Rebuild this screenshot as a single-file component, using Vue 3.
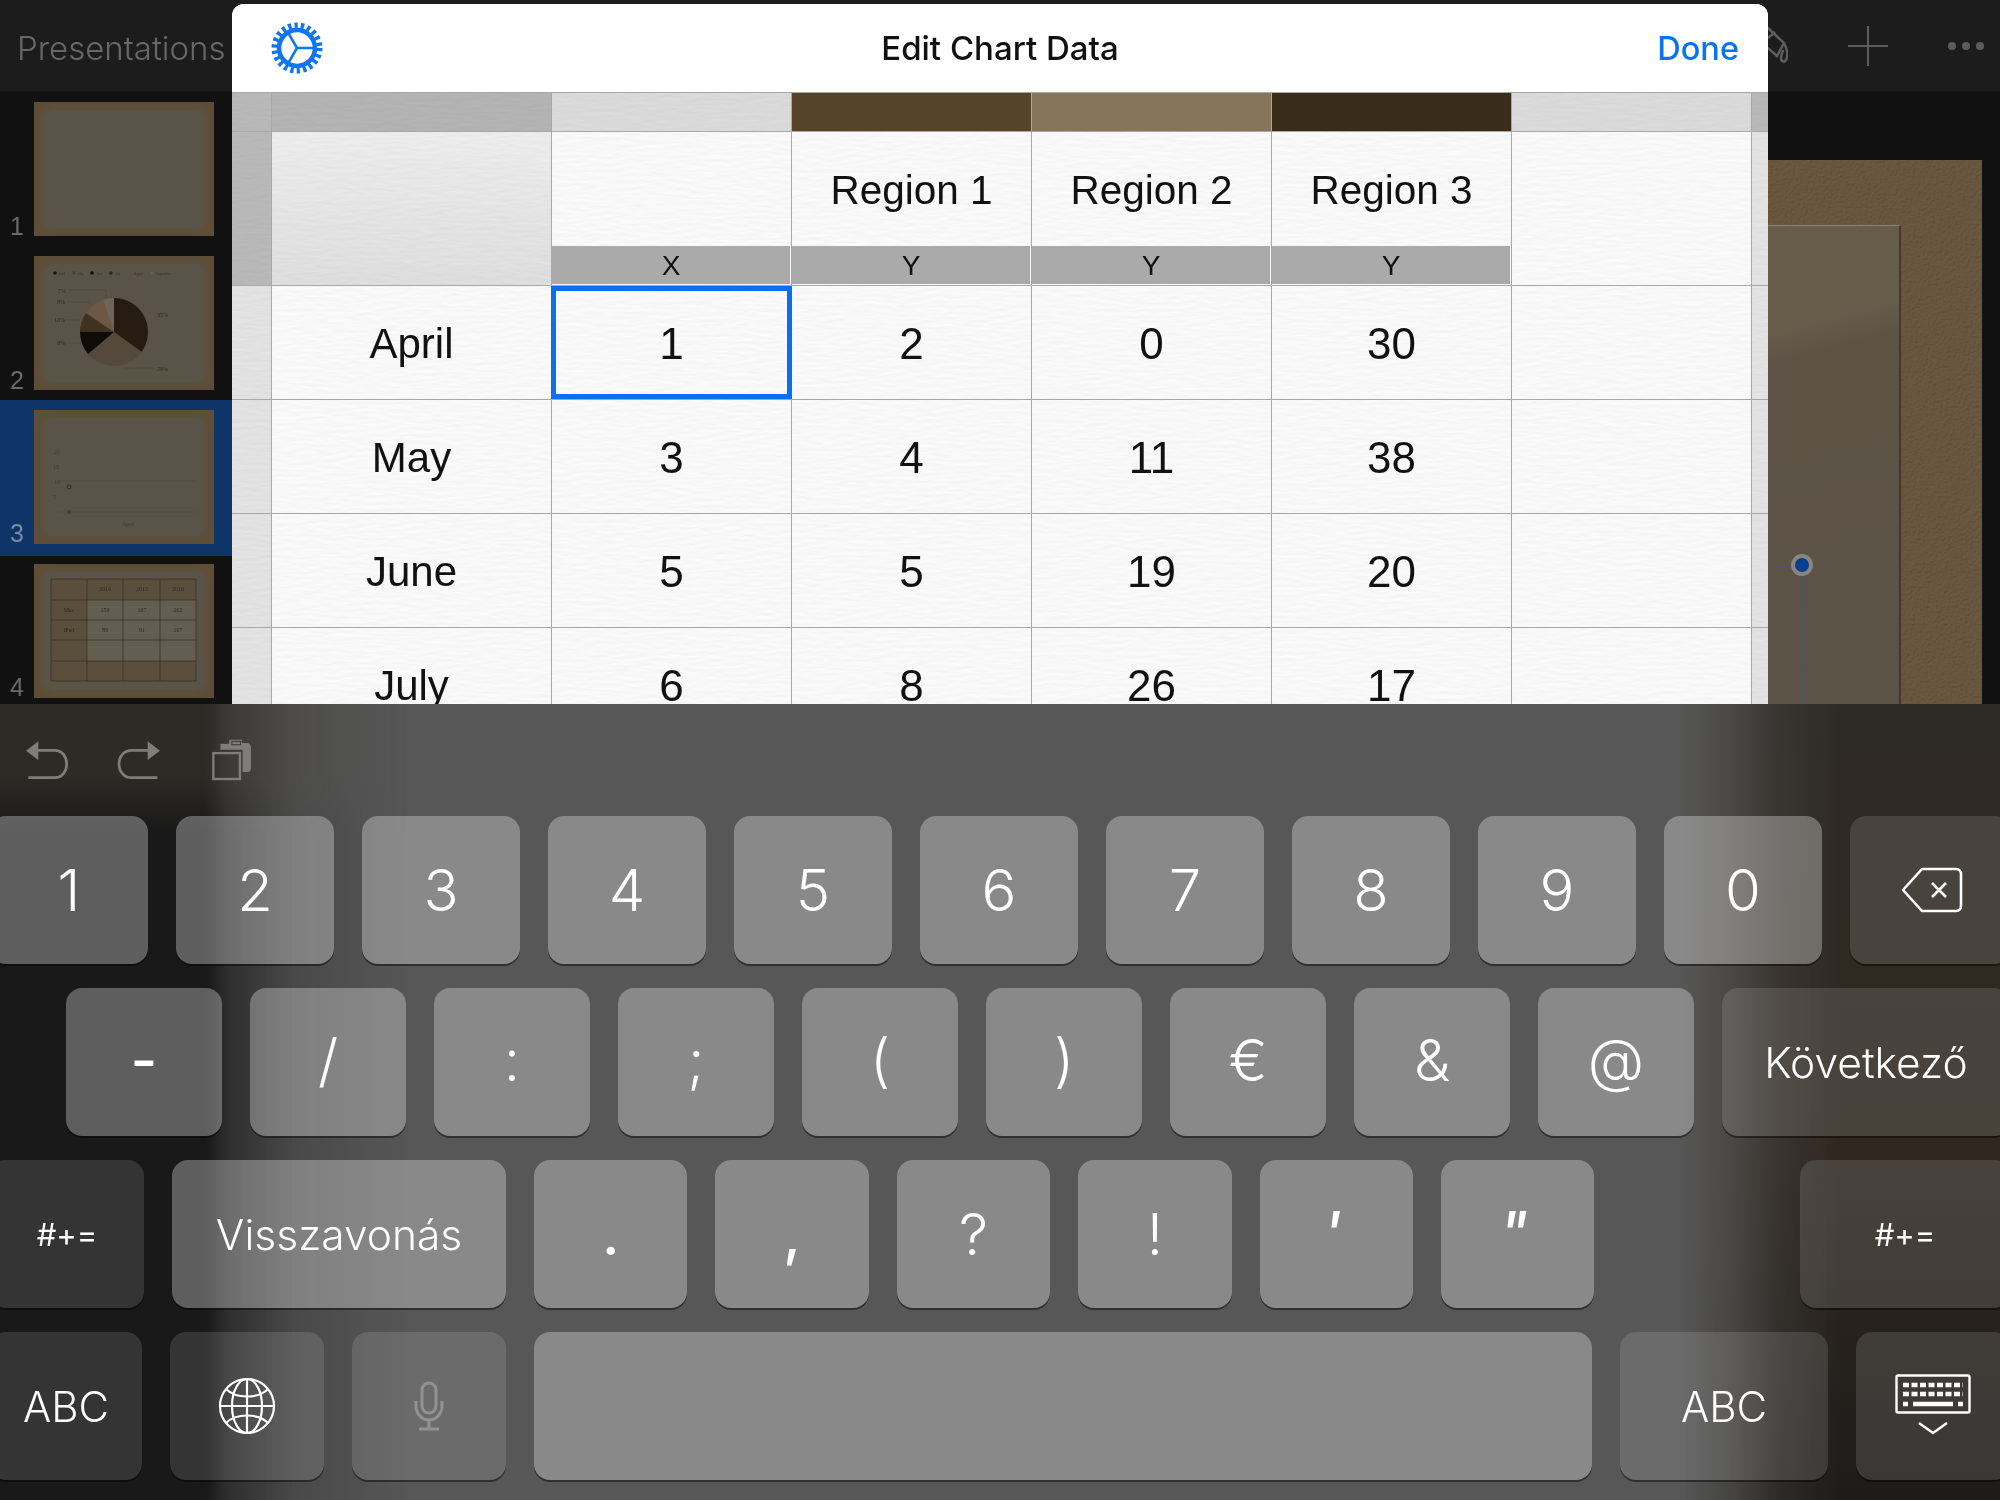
<script setup>
const heads = [
  { label: '', axis: 'X' },
  { label: 'Region 1', axis: 'Y' },
  { label: 'Region 2', axis: 'Y' },
  { label: 'Region 3', axis: 'Y' }
]
const rows = [
  ['April', '1', '2', '0', '30'],
  ['May', '3', '4', '11', '38'],
  ['June', '5', '5', '19', '20'],
  ['July', '6', '8', '26', '17']
]
const row1 = ['1', '2', '3', '4', '5', '6', '7', '8', '9', '0']
const row2 = ['-', '/', ':', ';', '(', ')', '€', '&', '@']
const row3 = [
  { k: '.', c: 'heavy' }, { k: ',', c: 'heavy' }, { k: '?', c: '' },
  { k: '!', c: '' }, { k: "'", c: 'slant' }, { k: '"', c: 'slant' }
]
const legend = [
  { x: 21, t: 'April', f: '#1c1610' }, { x: 40, t: 'May', f: '#4c4234' }, { x: 58, t: 'June', f: '#0d0a06' },
  { x: 77, t: 'July', f: '#2f2616' }, { x: 96, t: 'August', f: '#5f5242' }, { x: 118, t: 'September', f: '#66604f' }
]
const thumbLabels = [
  { x: 24, y: 37, t: '7%' }, { x: 23, y: 48, t: '8%' }, { x: 20, y: 66, t: '10%' },
  { x: 23, y: 89, t: '8%' }, { x: 123, y: 61, t: '35%' }, { x: 123, y: 115, t: '29%' }
]
const tableCells = [
  { x: 71, y: 27, t: '2014' }, { x: 108, y: 27, t: '2015' }, { x: 144, y: 27, t: '2016' },
  { x: 35, y: 48, t: 'Mac' }, { x: 71, y: 48, t: '159' }, { x: 108, y: 48, t: '167' }, { x: 144, y: 48, t: '202' },
  { x: 35, y: 68, t: 'iPad' }, { x: 71, y: 68, t: '89' }, { x: 108, y: 68, t: '91' }, { x: 144, y: 68, t: '107' }
]
</script>

<template>
  <div class="screen">
    <header class="topbar">
      <span class="back">Presentations</span>
      <div class="tools">
        <svg class="tool-bucket" width="42" height="40" viewBox="0 0 42 40" fill="none" stroke="#5e5e5e" stroke-width="2.4">
          <path d="M8 16 L22 2 L38 17 L31 30 L22 22 L8 34" />
          <path d="M22 12 L29 6" />
          <path d="M38 17 C41 23 42 29 40.5 33 C39 37 35 36 35 32 C35 29 36.5 27 37 24" />
        </svg>
        <svg class="tool-plus" width="40" height="40" viewBox="0 0 40 40" stroke="#5c5c5c" stroke-width="2">
          <path d="M20 0 V40 M0 20 H40" />
        </svg>
        <div class="tool-dots"><i></i><i></i><i></i></div>
      </div>
    </header>

    <main class="work">
      <aside class="slides">
        <div class="thumb-row"><span class="num">1</span>
          <div class="thumb"><div class="thumb-paper"></div></div>
        </div>
        <div class="thumb-row"><span class="num">2</span>
          <div class="thumb"><div class="thumb-paper"></div>
            <svg class="thumb-art" viewBox="0 0 180 134">
              <g v-for="l in legend" :key="l.t">
                <circle :cx="l.x" cy="17" r="1.8" :fill="l.f" />
                <text :x="l.x + 4" y="18.5" class="micro">{{ l.t }}</text>
              </g>
              <path d="M34 34 H72 V42 M34 46 H56 M30 64 H46 M30 87 H48 M90 112 H120" stroke="#4a4336" stroke-width=".5" fill="none" />
              <path d="M80 76 L80 42 A34 34 0 0 1 107.5 96 Z" fill="#261c12" />
              <path d="M80 76 L107.5 96 A34 34 0 0 1 54 97.9 Z" fill="#54493a" />
              <path d="M80 76 L54 97.9 A34 34 0 0 1 46 76 Z" fill="#0f0c07" />
              <path d="M80 76 L46 76 A34 34 0 0 1 52 57 Z" fill="#3f321e" />
              <path d="M80 76 L52 57 A34 34 0 0 1 69 44 Z" fill="#6c5844" />
              <path d="M80 76 L69 44 A34 34 0 0 1 80 42 Z" fill="#6e665a" />
              <text v-for="l in thumbLabels" :key="l.t + l.y" :x="l.x" :y="l.y" class="tiny">{{ l.t }}</text>
            </svg>
          </div>
        </div>
        <div class="thumb-row selected"><span class="num">3</span>
          <div class="thumb"><div class="thumb-paper"></div>
            <svg class="thumb-art" viewBox="0 0 180 134">
              <path d="M24 71 H162 M24 102 H162" stroke="#4f4738" stroke-width=".4" />
              <circle cx="35" cy="77" r="2" fill="none" stroke="#2a2418" stroke-width=".8" />
              <path d="M34 100 V104 M36 100 V104" stroke="#2a2418" stroke-width=".7" />
              <text x="20" y="44" class="tiny faint">20</text><text x="19" y="59" class="tiny faint">15</text>
              <text x="20" y="74" class="tiny faint">10</text><text x="19" y="89" class="tiny faint">5</text>
              <text x="88" y="116" class="tiny faint">April</text>
            </svg>
          </div>
        </div>
        <div class="thumb-row"><span class="num">4</span>
          <div class="thumb"><div class="thumb-paper"></div>
            <svg class="thumb-art" viewBox="0 0 180 134">
              <rect x="17" y="15" width="145" height="102" fill="#5a4d38" opacity=".75" />
              <rect x="53" y="36" width="109" height="61" fill="#645e52" />
              <path d="M17 15 H162 V117 H17 Z M17 36 H162 M17 56 H162 M17 76 H162 M17 97 H162 M53 15 V117 M89 15 V117 M126 15 V117" fill="none" stroke="#2e2618" stroke-width=".6" />
              <text v-for="c in tableCells" :key="c.t + c.x" :x="c.x" :y="c.y" class="tiny mid">{{ c.t }}</text>
            </svg>
          </div>
        </div>
      </aside>

      <section class="canvas">
        <div class="slide">
          <svg class="grain" width="100%" height="100%">
            <filter id="sand"><feTurbulence type="fractalNoise" baseFrequency="0.4" numOctaves="3" seed="4" /><feDiffuseLighting lighting-color="#ffffff" surfaceScale="1.4"><feDistantLight azimuth="60" elevation="62" /></feDiffuseLighting></filter>
            <rect width="100%" height="100%" filter="url(#sand)" />
          </svg>
          <div class="slide-paper"></div>
          <div class="sel-h"></div>
          <div class="sel-v"></div>
          <div class="handle"></div>
        </div>
      </section>
    </main>

    <div class="modal">
      <div class="modal-head">
        <svg class="gear" width="52" height="52" viewBox="0 0 52 52" fill="none" stroke="#0f76f0">
          <circle cx="26" cy="26" r="22.5" stroke-width="6" stroke-dasharray="3.3 3.126" />
          <circle cx="26" cy="26" r="18" stroke-width="4.6" />
          <path d="M26 26 H43 M26 26 L17.5 11.3 M26 26 L17.5 40.7" stroke-width="2.6" />
        </svg>
        <span class="title">Edit Chart Data</span>
        <span class="done">Done</span>
      </div>
      <div class="sheet">
        <svg class="paper" width="100%" height="100%">
          <filter id="paperTex"><feTurbulence type="fractalNoise" baseFrequency="0.06 0.28" numOctaves="3" seed="7" /><feDiffuseLighting lighting-color="#ffffff" surfaceScale="0.22"><feDistantLight azimuth="90" elevation="70" /></feDiffuseLighting></filter>
          <rect width="100%" height="100%" filter="url(#paperTex)" />
        </svg>
        <div class="grid">
          <div class="cell edge-dark"></div>
          <div class="cell tone-dark"></div>
          <div class="cell tone-light"></div>
          <div class="cell c-a"></div>
          <div class="cell c-b"></div>
          <div class="cell c-c"></div>
          <div class="cell tone-light"></div>
          <div class="cell last edge-dark"></div>

          <div class="cell edge-dark"></div>
          <div class="cell tone-mid"></div>
          <div v-for="h in heads" :key="h.label + h.axis" class="cell head">
            <span class="head-label">{{ h.label }}</span>
            <span class="axis">{{ h.axis }}</span>
          </div>
          <div class="cell"></div>
          <div class="cell last edge-light"></div>

          <template v-for="(r, ri) in rows" :key="r[0]">
            <div class="cell edge-light"></div>
            <div
              v-for="(v, ci) in r"
              :key="ci"
              class="cell val"
              :class="{ active: ri === 0 && ci === 1, month: ci === 0 }"
            >{{ v }}</div>
            <div class="cell"></div>
            <div class="cell last edge-light"></div>
          </template>
        </div>
      </div>
    </div>

    <section class="kb">
      <div class="kb-tools">
        <svg class="ic-undo" width="44" height="40" viewBox="75 118 132 120">
          <path d="M78 150 L115 122 V178 Z" fill="#7d7d7a" />
          <path d="M112 149 H165 C186 149 200 168 200 190 C200 212 186 231 165 231 H85" fill="none" stroke="#7d7d7a" stroke-width="8" />
        </svg>
        <svg class="ic-redo" width="44" height="40" viewBox="352 118 132 120">
          <path d="M481 150 L444 122 V178 Z" fill="#7d7d7a" />
          <path d="M447 149 H395 C373 149 358 168 358 190 C358 212 373 231 395 231 H473" fill="none" stroke="#7d7d7a" stroke-width="8" />
        </svg>
        <svg class="ic-copy" width="41" height="42" viewBox="632 118 122 125">
          <path d="M660 150 V132 H686 V120 H724 V130 H738 C746 130 751 135 751 143 V206 C751 213 747 216 742 216 H726 V150 Z" fill="#7d7d7a" />
          <rect x="694" y="125" width="26" height="10" fill="none" stroke="#3c3a38" stroke-width="3" />
          <rect x="639" y="160" width="79" height="77" fill="none" stroke="#7d7d7a" stroke-width="7" />
        </svg>
      </div>

      <div class="kb-row">
        <button v-for="k in row1" :key="k" class="key light w158">{{ k }}</button>
        <button class="key dark w160">
          <svg class="ic-back" width="62" height="46" viewBox="0 0 62 46" fill="none" stroke="#fff" stroke-width="2.6">
            <path d="M2 23 L21 2 H55 C58 2 60 4 60 7 V39 C60 42 58 44 55 44 H21 Z" stroke-linejoin="round" />
            <path d="M31 16 L45 30 M45 16 L31 30" />
          </svg>
        </button>
      </div>

      <div class="kb-row r2">
        <button v-for="(k, i) in row2" :key="k" class="key light w156 up" :class="{ heavy: i === 0 }">{{ k }}</button>
        <button class="key dark w288 word">Következő</button>
      </div>

      <div class="kb-row r3">
        <button class="key dark w154 small">#+=</button>
        <button class="key light w334 word">Visszavonás</button>
        <button v-for="k in row3" :key="k.k" class="key light w153" :class="k.c">{{ k.k }}</button>
        <button class="key dark w210 small push">#+=</button>
      </div>

      <div class="kb-row">
        <button class="key dark w152 abc">ABC</button>
        <button class="key dark w154">
          <svg width="58" height="58" viewBox="0 0 58 58" fill="none" stroke="#fff" stroke-width="2.2">
            <circle cx="29" cy="29" r="27" />
            <ellipse cx="29" cy="29" rx="15" ry="27" />
            <path d="M29 2 V56 M2 29 H56" />
            <path d="M8 12 C18 22 40 22 50 12 M8 46 C18 36 40 36 50 46" />
          </svg>
        </button>
        <button class="key dark w154">
          <svg width="30" height="50" viewBox="0 0 30 50" fill="none" stroke="#929292" stroke-width="3">
            <rect x="8" y="2" width="14" height="30" rx="7" />
            <path d="M2 20 V25 C2 33 8 39 15 39 C22 39 28 33 28 25 V20 M15 39 V47 M5 48 H25" />
          </svg>
        </button>
        <button class="key light w1058"></button>
        <button class="key dark w208 abc">ABC</button>
        <button class="key dark w154">
          <svg width="76" height="64" viewBox="0 0 76 64" fill="none" stroke="#fff">
            <rect x="1.5" y="1.5" width="73" height="37" rx="1.5" stroke-width="2.4" />
            <path d="M8 11 H68" stroke-width="4.5" stroke-dasharray="6 2.5" />
            <path d="M8 20 H68" stroke-width="4.5" stroke-dasharray="6 2.5" />
            <path d="M8 30 H13 M18 30 H58 M63 30 H68" stroke-width="4.5" />
            <path d="M24 49 L38 59 L52 49" stroke-width="2.4" />
          </svg>
        </button>
      </div>
    </section>
  </div>
</template>

<style>
html, body { margin: 0; background: #111; }
</style>

<style scoped>
.screen {
  position: relative;
  width: 2000px;
  height: 1500px;
  display: flex;
  flex-direction: column;
  overflow: hidden;
  font-family: "Liberation Sans", Arial, sans-serif;
  background: #111;
}
.topbar {
  height: 92px;
  flex: none;
  box-sizing: border-box;
  background: #1c1c1c;
  border-bottom: 1px solid #141414;
  display: flex;
  align-items: center;
  justify-content: space-between;
  padding: 0 16px 0 17px;
}
.back { font: 300 33px Inter, "Liberation Sans", sans-serif; color: #686868; margin-top: 5px; }
.tools { display: flex; align-items: center; }
.tool-bucket { margin-right: 60px; }
.tool-plus { margin-right: 60px; }
.tool-dots { display: flex; gap: 6px; }
.tool-dots i { width: 8px; height: 8px; border-radius: 50%; background: #5c5c5c; }

.work { flex: none; height: 612px; display: flex; overflow: hidden; }
.slides { width: 232px; flex: none; background: #111; }
.thumb-row { height: 154px; position: relative; display: flex; padding: 10px 0 0 34px; box-sizing: border-box; }
.thumb-row.selected { height: 156px; background: #0f3468; }
.thumb-row:nth-child(4) { padding-top: 8px; }
.num { position: absolute; left: 10px; top: 119px; font-size: 25px; color: #6a6a6a; line-height: 30px; }
.selected .num { color: #7a8aa2; top: 118px; }
.thumb-row:nth-child(4) .num { top: 116px; }
.thumb { width: 180px; height: 134px; background: #5e4e38; position: relative; }
.thumb-paper {
  position: absolute; inset: 8px 10px 8px 10px;
  border-radius: 8px;
  background: #5a5347;
  box-shadow: 0 0 6px 1px #5a5347;
}
.thumb-art { position: absolute; inset: 0; width: 180px; height: 134px; }
.tiny { font-size: 6px; fill: #2f2a20; font-family: "Liberation Serif", serif; }
.faint { fill: #403a2e; }
.micro { font-size: 3px; fill: #3a3428; font-family: "Liberation Sans", sans-serif; }
.mid { text-anchor: middle; }

.canvas { flex: 1; background: #111; padding-top: 68px; display: flex; justify-content: flex-end; }
.slide { position: relative; width: 420px; height: 600px; margin-right: 18px; background: #6a583f; overflow: hidden; display: flex; }
.grain { position: absolute; inset: 0; opacity: .45; mix-blend-mode: multiply; }
.slide-paper {
  position: relative;
  width: 339px;
  margin: 65px 0 0 0;
  height: 600px;
  box-sizing: border-box;
  background: linear-gradient(165deg, #665c4a 0, #665c4a 24%, #5d5446 28%, #5a5245 100%);
  border-right: 2px solid #46382a;
  border-top: 1px solid #8d8470;
}
.sel-h { position: absolute; left: 180px; top: 406px; width: 50px; height: 1px; background: #4e5268; }
.sel-v { position: absolute; left: 239px; top: 414px; width: 2px; height: 200px; background: #4e5268; }
.handle { position: absolute; left: 229px; top: 394px; box-sizing: border-box; width: 22px; height: 22px; border: 4px solid #88867f; border-radius: 50%; background: #0c3f8e; }

.modal {
  position: absolute; left: 232px; top: 4px; width: 1536px; height: 700px;
  border-radius: 12px 12px 0 0;
  overflow: hidden;
  display: flex; flex-direction: column;
  background: #fff;
}
.modal-head {
  height: 88px; flex: none;
  position: relative;
  display: flex; align-items: center; justify-content: space-between;
  padding: 0 29px 0 39px;
  background: #fff;
  color: #111;
}
.gear { display: block; }
.title { position: absolute; left: 0; right: 0; text-align: center; font: 500 33px Inter, "Liberation Sans", sans-serif; }
.done { font: 500 32.5px Inter, "Liberation Sans", sans-serif; color: #0a74f0; }
.sheet { position: relative; flex: 1; overflow: hidden; border-top: 1px solid #a8a8a8; }
.paper { position: absolute; inset: 0; }
.grid {
  position: relative;
  display: grid;
  grid-template-columns: 40px 280px repeat(5, 240px) 16px;
  grid-template-rows: 39px 154px repeat(4, 114px);
}
.cell {
  box-sizing: border-box;
  border-right: 1px solid #a8a8a8;
  border-bottom: 1px solid #a8a8a8;
  position: relative;
}
.cell.last { border-right: 0; }
.edge-dark { background: rgba(0, 0, 0, .26); }
.edge-light { background: rgba(0, 0, 0, .09); }
.tone-dark { background: rgba(0, 0, 0, .28); }
.tone-mid { background: linear-gradient(180deg, rgba(0, 0, 0, .05), rgba(0, 0, 0, .11)); }
.tone-light { background: rgba(0, 0, 0, .12); }
.c-a { background: #57432a; }
.c-b { background: #86755a; }
.c-c { background: #3a2c1a; }
.head { display: flex; flex-direction: column; }
.head-label { flex: 1; display: flex; align-items: center; justify-content: center; font-size: 40.5px; color: #111; padding-top: 2px; }
.axis { height: 38px; line-height: 39px; text-align: center; font-size: 28px; color: #111; background: #aaa; margin: 0 1px 1px 0; }
.val { display: flex; align-items: center; justify-content: center; font-size: 44px; color: #111; padding-top: 2px; }
.month { font-size: 42px; }
.active::after { content: ""; position: absolute; inset: 0 -1px 0 -1px; border: 5px solid #0a70ee; }

.kb {
  position: relative;
  flex: none;
  height: 796px;
  overflow: hidden;
  color: #fff;
  background: #575757;
}
.kb::before {
  content: "";
  position: absolute;
  inset: 0 auto 0 0;
  width: 420px;
  background: linear-gradient(180deg, #2e2a26 0, #2e2a26 70px, #191919 130px, #191919 100%);
  -webkit-mask-image: linear-gradient(90deg, #000 0, #000 206px, rgba(0, 0, 0, .65) 228px, rgba(0, 0, 0, .22) 295px, transparent 410px);
  mask-image: linear-gradient(90deg, #000 0, #000 206px, rgba(0, 0, 0, .65) 228px, rgba(0, 0, 0, .22) 295px, transparent 410px);
}
.kb::after {
  content: "";
  position: absolute;
  inset: 0 0 0 auto;
  width: 320px;
  background: linear-gradient(180deg, #2e2a24 0, #302820 56%, #1e1c1a 100%);
  -webkit-mask-image: linear-gradient(90deg, transparent 0, rgba(0, 0, 0, .3) 50px, rgba(0, 0, 0, .75) 100px, #000 160px);
  mask-image: linear-gradient(90deg, transparent 0, rgba(0, 0, 0, .3) 50px, rgba(0, 0, 0, .75) 100px, #000 160px);
}
.kb-tools { height: 112px; display: flex; align-items: center; padding-left: 25px; position: relative; z-index: 1; }
.ic-undo { margin-right: 48px; }
.ic-redo { margin-right: 50px; }
.kb-row {
  position: relative;
  z-index: 1;
  width: 2020px;
  margin: 0 0 24px -10px;
  display: flex;
  gap: 28px;
  height: 148px;
}
.r2 { padding-left: 76px; box-sizing: border-box; }
.key {
  flex: none;
  border: 0;
  padding: 0;
  border-radius: 16px;
  color: #fff;
  font: 300 58px Inter, "Liberation Sans", sans-serif;
  display: flex;
  align-items: center;
  justify-content: center;
  box-shadow: 0 2px 0 rgba(0, 0, 0, .45);
}
.light { background: rgba(255, 255, 255, .3); }
.dark { background: rgba(255, 255, 255, .12); }
.word { font-size: 42.5px; }
.small { font-size: 31px; font-weight: 400; }
.abc { font-size: 42px; }
.up { padding-bottom: 5px; }
.heavy { font-weight: 500; }
.slant { font-style: italic; font-weight: 500; padding: 0 8px 4px 0; }
.ic-back { margin-left: 4px; }
.w152 { width: 152px; } .w153 { width: 153.4px; } .w154 { width: 154px; } .w156 { width: 156px; }
.w158 { width: 158px; } .w160 { width: 160px; } .w208 { width: 208px; } .w210 { width: 210px; }
.w288 { width: 288px; } .w334 { width: 334px; } .w1058 { width: 1058px; }
.push { margin-left: auto; }
</style>
